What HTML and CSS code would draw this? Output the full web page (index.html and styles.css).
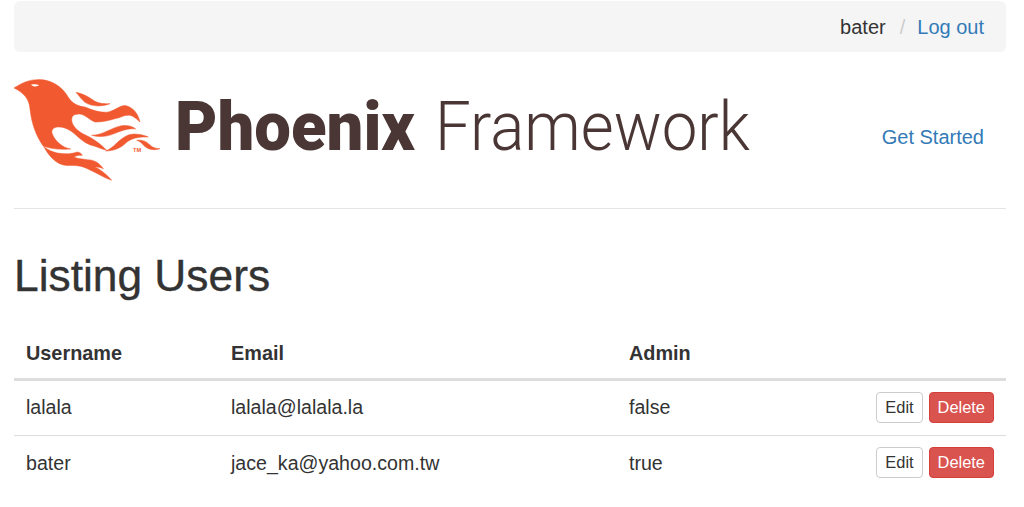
FILE: index.html
```html
<!DOCTYPE html>
<html lang="en">
<head>
<meta charset="utf-8">
<title>Listing Users</title>
<link rel="stylesheet" href="styles.css">
</head>
<body>
<div class="container">
  <nav class="crumbs"><span>bater</span><span class="sep">/</span><a href="#">Log out</a></nav>
  <header class="header">
    <svg class="logo" viewBox="0 0 736 106" role="img" aria-label="Phoenix Framework">
      <g class="flame" transform="translate(-14 -10) scale(.3333)">
        <path d="M42 57C62 44 85 32 112 32C150 30 185 50 205 85C218 105 235 112 255 114C280 125 305 132 325 129C345 125 360 108 378 110C400 115 415 135 420 159C405 145 395 138 385 139C370 138 360 148 345 149C325 155 305 160 285 159C270 155 250 130 232 136C215 136 212 150 218 165C228 185 250 195 270 205C285 213 305 228 320 244C305 240 295 236 285 232C265 228 250 218 235 205C220 190 200 174 177 174C160 174 152 182 157 195C165 215 185 235 212 240C185 243 155 240 130 232C108 200 95 165 90 120C88 90 70 70 42 57Z"/>
        <path d="M228 70C255 75 270 87 285 97C300 104 315 105 330 104C305 114 275 113 255 100C245 92 238 82 228 70Z"/>
        <path d="M275 199C310 198 335 175 365 170C385 168 398 172 407 180C385 177 365 185 345 193C325 202 300 206 275 199Z"/>
        <path d="M317 246C345 235 355 210 385 198C400 193 425 195 445 204C415 203 395 208 380 220C365 235 345 246 317 246Z"/>
        <path d="M410 214C430 211 442 220 450 228C458 236 468 239 480 239C460 246 442 240 432 230C426 223 420 217 410 214Z"/>
        <path d="M132 234C145 243 158 249 172 252C195 256 215 255 232 249C240 250 245 254 247 259C238 258 228 260 222 264C235 270 250 270 262 272C280 272 297 280 310 299C300 295 292 294 285 294C300 300 322 318 335 334C312 326 290 312 270 303C258 297 245 291 230 290C215 289 205 291 190 288C165 282 145 258 132 234Z"/>
        <path class="eye" d="M93 47C100 45 110 45 117 48C112 54 100 54 93 47Z"/>
        <text class="tm" x="399" y="248">TM</text>
      </g>
      <text class="word-bold" x="161" y="71" textLength="240" lengthAdjust="spacingAndGlyphs">Phoenix</text>
      <text class="word-light" x="421" y="71" textLength="315" lengthAdjust="spacingAndGlyphs">Framework</text>
    </svg>
    <a class="started" href="#">Get Started</a>
  </header>
  <h1 class="title">Listing Users</h1>
  <table class="users">
    <thead>
      <tr><th class="col-name">Username</th><th class="col-email">Email</th><th class="col-admin">Admin</th><th></th></tr>
    </thead>
    <tbody>
      <tr>
        <td>lalala</td><td>lalala@lalala.la</td><td>false</td>
        <td class="actions"><a class="btn" href="#">Edit</a><a class="btn danger" href="#">Delete</a></td>
      </tr>
      <tr>
        <td>bater</td><td>jace_ka@yahoo.com.tw</td><td>true</td>
        <td class="actions"><a class="btn" href="#">Edit</a><a class="btn danger" href="#">Delete</a></td>
      </tr>
    </tbody>
  </table>
</div>
</body>
</html>
```
FILE: styles.css
```css
* { box-sizing: border-box; }
html, body { margin: 0; padding: 0; background: #fff; }
body {
  font-family: "Liberation Sans", Arial, sans-serif;
  font-size: 20px;
  line-height: 28px;
  color: #333;
  overflow: hidden;
}
a { color: #337ab7; text-decoration: none; }
.container { width: 992px; margin: 1px 0 0 14px; }
.crumbs {
  display: flex;
  justify-content: flex-end;
  align-items: center;
  height: 51px;
  padding: 0 22px;
  background: #f5f5f5;
  border-radius: 6px;
}
.sep { color: #ccc; margin: 0 12px 0 14px; }
.header {
  display: flex;
  justify-content: space-between;
  align-items: flex-start;
  height: 157px;
  padding: 27px 22px 0 0;
  border-bottom: 1px solid #e5e5e5;
}
.logo { display: block; width: 736px; height: 106px; overflow: visible; }
.flame { fill: #f15a30; stroke: #f15a30; stroke-width: 1.5px; }
.flame .eye { fill: #fff; stroke: none; }
.flame .tm { font: 700 17px "Liberation Sans", sans-serif; stroke: none; }
.word-bold { font: 900 68px Roboto, sans-serif; fill: #4a3735; }
.word-light { font: 300 68px Roboto, sans-serif; fill: #4a3735; }
.started { margin-top: 44px; }
.title {
  margin: 42px 0 0;
  font-size: 44.3px;
  line-height: 50px;
  font-weight: 400;
  -webkit-text-stroke: .4px #333;
}
.users {
  width: 100%;
  margin-top: 26px;
  border-collapse: separate;
  border-spacing: 0;
  table-layout: fixed;
}
.users th, .users td { padding: 0 12px; text-align: left; }
.users th { height: 54px; border-bottom: 3px solid #ddd; font-weight: 700; font-size: 19.85px; }
.users td { height: 55px; padding-bottom: 2px; border-bottom: 1px solid #ddd; font-size: 19.6px; }
.users tr:last-child td { border-bottom: 0; }
.col-name { width: 205px; }
.col-email { width: 398px; }
.col-admin { width: 200px; }
.users .actions { text-align: right; }
.btn {
  display: inline-block;
  height: 31px;
  padding: 0 8px;
  margin-left: 6px;
  border: 1px solid #ccc;
  border-radius: 4px;
  background: #fff;
  color: #333;
  font-size: 16.4px;
  line-height: 29px;
  vertical-align: top;
}
.danger { background: #d9534f; border-color: #d43f3a; color: #fff; }
```
